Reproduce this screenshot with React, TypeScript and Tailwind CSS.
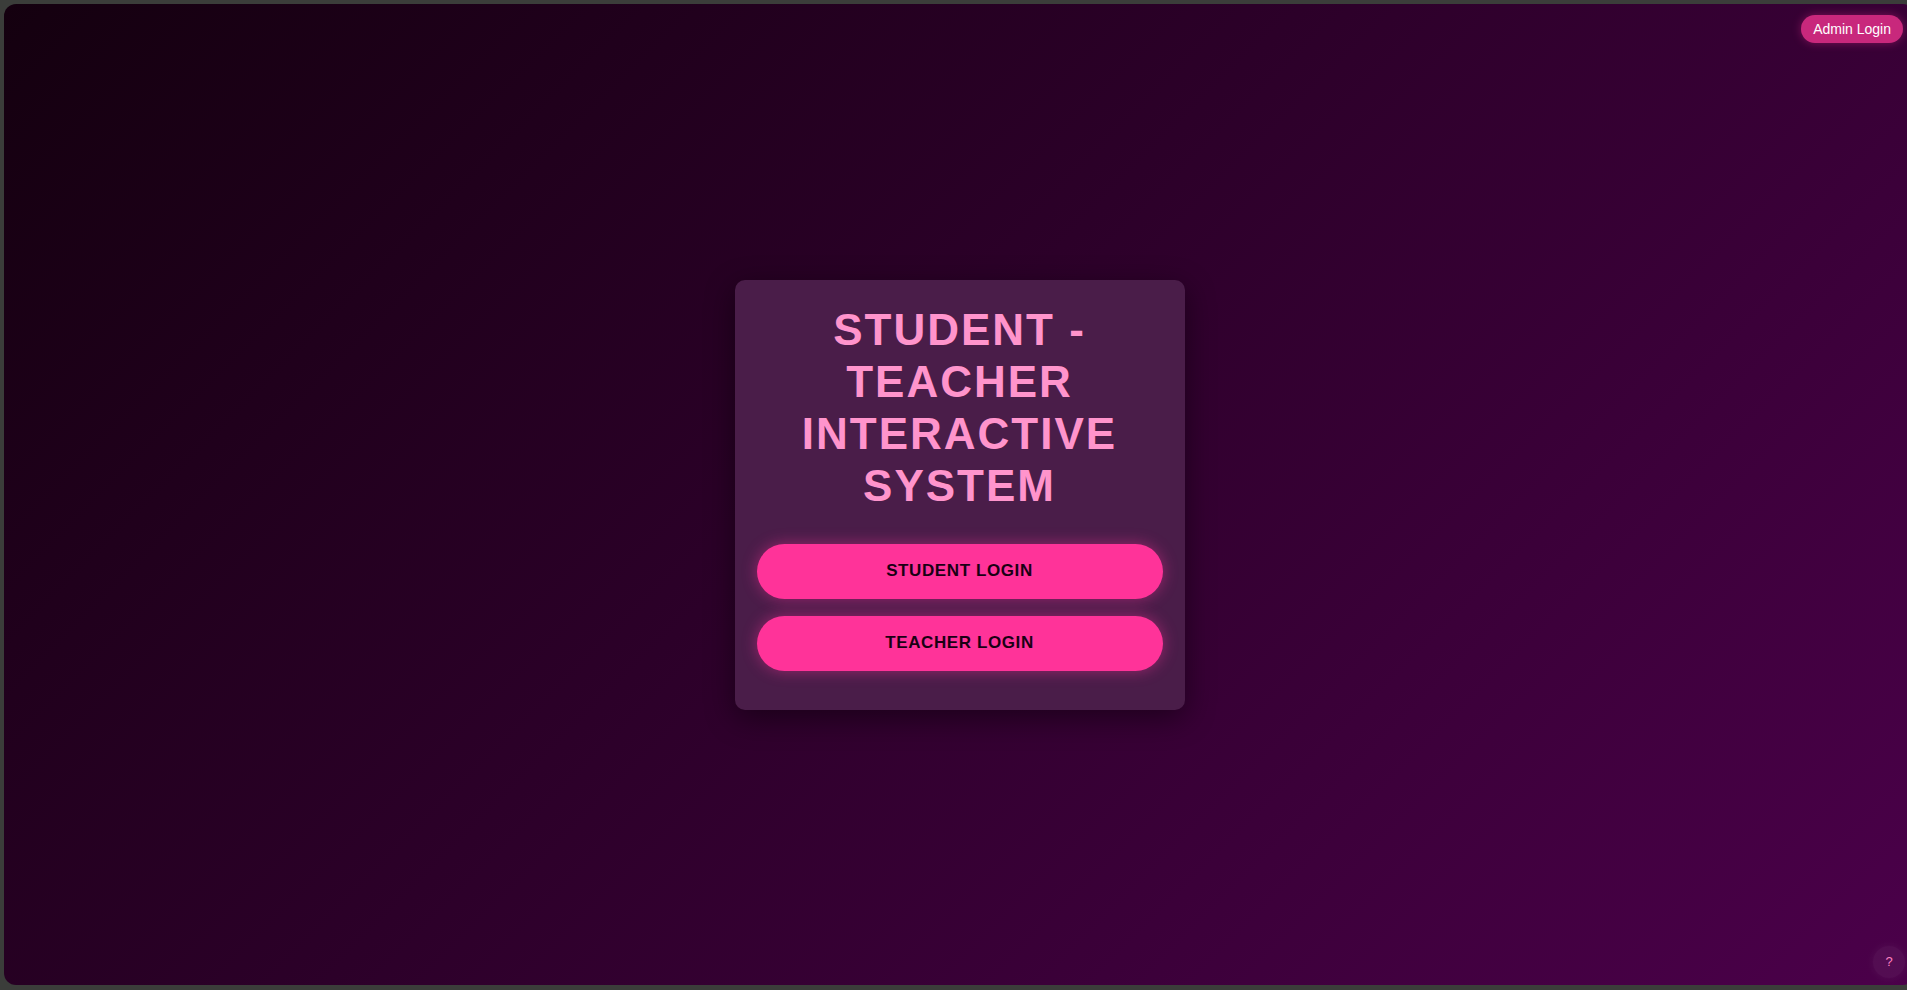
export default function App() {
  return (
    <div className="h-screen w-full overflow-hidden bg-[#3b3d3a] pt-[4px] pb-[5px] pl-[4px] font-['Liberation_Sans',Arial,sans-serif]">
      <div className="relative flex h-full w-[calc(100%+8px)] items-center justify-center rounded-xl bg-[linear-gradient(135deg,#14000f_0%,#2c0029_45%,#4b004a_100%)]">
        {/* Admin */}
        <button className="absolute right-[12px] top-[11px] h-[28px] rounded-full bg-[#c8287c] px-[12px] text-[14px] text-white shadow-[0_0_10px_rgba(255,51,153,0.35)]">
          Admin Login
        </button>

        {/* Card */}
        <div className="w-[450px] rounded-[10px] bg-[#4a1d49] px-[22px] pt-[24px] pb-[39px] shadow-[0_8px_30px_rgba(0,0,0,0.45)]">
          <h1 className="mb-[32px] text-center text-[44px] font-bold uppercase leading-[52px] tracking-[2px] text-[#ff94cc]">
            Student - Teacher Interactive System
          </h1>
          <div className="flex flex-col gap-[17px]">
            <button className="h-[55px] w-full rounded-full bg-[#ff3399] text-[17px] font-bold tracking-[0.6px] text-[#1a0014] shadow-[0_0_15px_rgba(255,51,153,0.45)]">
              STUDENT LOGIN
            </button>
            <button className="h-[55px] w-full rounded-full bg-[#ff3399] text-[17px] font-bold tracking-[0.6px] text-[#1a0014] shadow-[0_0_15px_rgba(255,51,153,0.45)]">
              TEACHER LOGIN
            </button>
          </div>
        </div>

        {/* Help */}
        <button className="absolute bottom-[7px] right-[10px] flex h-8 w-8 items-center justify-center rounded-full bg-white/5 text-[13px] text-[#ff80c0] shadow-[0_0_8px_rgba(255,255,255,0.06)]">
          ?
        </button>
      </div>
    </div>
  )
}
